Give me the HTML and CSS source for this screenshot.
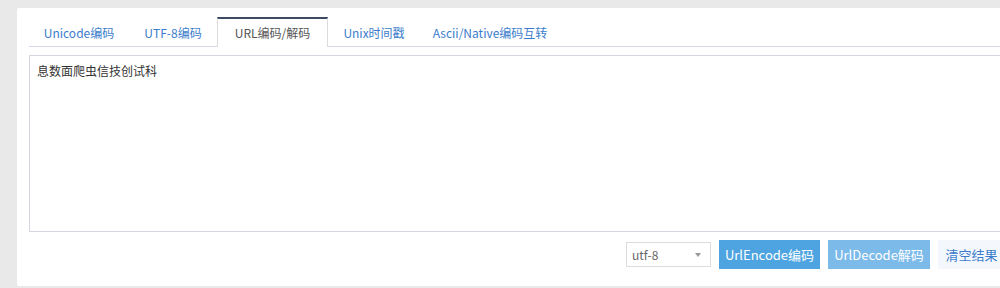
FILE: index.html
```html
<!DOCTYPE html>
<html lang="zh-CN">
<head>
<meta charset="utf-8">
<title>URL编码/解码</title>
<link rel="stylesheet" href="styles.css">
</head>
<body>
<div class="panel">
  <ul class="tabs">
    <li class="tab t1">Unicode编码</li>
    <li class="tab t2">UTF-8编码</li>
    <li class="tab t3 active">URL编码/解码</li>
    <li class="tab t4">Unix时间戳</li>
    <li class="tab t5">Ascii/Native编码互转</li>
  </ul>
  <div class="editor">息数面爬虫信技创试科</div>
  <div class="actions">
    <div class="select"><span>utf-8</span><i class="caret"></i></div>
    <button class="btn primary">UrlEncode编码</button>
    <button class="btn light">UrlDecode解码</button>
    <button class="btn plain">清空结果</button>
  </div>
</div>
</body>
</html>
```
FILE: styles.css
```css
html, body {
  margin: 0;
  padding: 0;
  background: #e9e9e9;
  overflow: hidden;
  font-family: "Noto Sans CJK SC", "Noto Sans", sans-serif;
}
.panel {
  box-sizing: border-box;
  width: 1000px;
  margin: 8px 0 0 17px;
  padding: 9px 12px 17px 12px;
  background: #fff;
  border-radius: 2px;
}
.tabs {
  list-style: none;
  margin: 0;
  padding: 0;
  display: flex;
  border-bottom: 1px solid #d6d6ea;
}
.tab {
  box-sizing: border-box;
  height: 30px;
  line-height: 27px;
  margin-bottom: -1px;
  border-top: 2px solid transparent;
  border-left: 1px solid transparent;
  border-right: 1px solid transparent;
  text-align: center;
  font-size: 12px;
  color: #3b7dcc;
  white-space: nowrap;
}
.t1 { width: 100px; }
.t2 { width: 88px; }
.t3 { width: 111px; }
.t4 { width: 92px; }
.t5 { width: 140px; }
.tab.active {
  background: #fff;
  color: #555;
  border-top-color: #3e4a62;
  border-left-color: #dcdcdc;
  border-right-color: #dcdcdc;
}
.editor {
  box-sizing: border-box;
  height: 177px;
  margin-top: 8px;
  padding: 5px 7px;
  border: 1px solid #d4d4e2;
  font-size: 12px;
  line-height: 20px;
  color: #333;
}
.actions {
  display: flex;
  justify-content: flex-end;
  align-items: center;
  gap: 8px;
  margin-top: 8px;
  height: 29px;
}
.select {
  box-sizing: border-box;
  width: 85px;
  height: 25px;
  border: 1px solid #dcdcdc;
  display: flex;
  align-items: center;
  justify-content: space-between;
  padding: 0 9px 0 5px;
  font-size: 12px;
  color: #666;
}
.caret {
  width: 0;
  height: 0;
  border-left: 3px solid transparent;
  border-right: 3px solid transparent;
  border-top: 4px solid #999;
}
.btn {
  box-sizing: border-box;
  height: 29px;
  border: none;
  padding: 0;
  font-family: inherit;
  font-size: 13px;
  cursor: pointer;
}
.primary {
  width: 101px;
  background: #4ea4e0;
  color: #fff;
}
.light {
  width: 102px;
  background: #7cbaea;
  color: #fff;
}
.plain {
  width: 67px;
  background: #f4f8fd;
  color: #3b7dcc;
}
```
